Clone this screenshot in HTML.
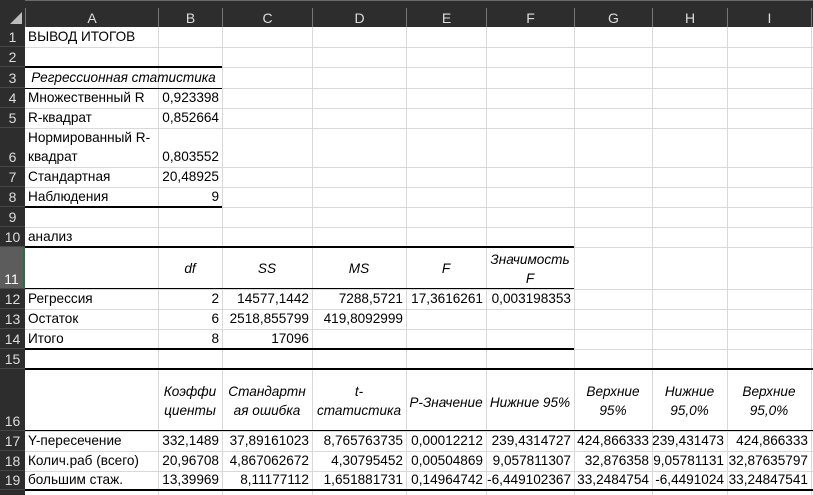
<!DOCTYPE html>
<html><head><meta charset="utf-8"><style>
*{margin:0;padding:0;box-sizing:border-box}
body{width:813px;height:495px;overflow:hidden;background:#fff;position:relative;font-family:"Liberation Sans","DejaVu Sans",sans-serif;font-size:13.6px;color:#000}
div{position:absolute}
.v{width:1px;background:#d9d9d9;top:27px;height:468px}
.h{height:1px;background:#d9d9d9;left:25px;width:788px}
.k{background:#000}
.c{display:flex;align-items:flex-end;line-height:19px;padding-bottom:1px;white-space:nowrap}
.l{padding-left:3px}
.r{justify-content:flex-end;padding-right:3px}
.m{justify-content:center;text-align:center;font-style:italic}
.hd{background:#2d2d2d;color:#dcdcdc;font-size:14px;display:flex;align-items:center;justify-content:center}
.rh{left:0;width:25px;background:#2d2d2d;color:#dcdcdc;font-size:14px;display:flex;align-items:flex-end;justify-content:center;padding-bottom:1px;border-bottom:1px solid #474747}
</style></head><body>
<div class="v" style="left:158px"></div><div class="v" style="left:222px"></div><div class="v" style="left:312px"></div><div class="v" style="left:406px"></div><div class="v" style="left:486px"></div><div class="v" style="left:574px"></div><div class="v" style="left:652px"></div><div class="v" style="left:727px"></div><div class="v" style="left:811px"></div>
<div class="h" style="top:47px"></div><div class="h" style="top:67px"></div><div class="h" style="top:88px"></div><div class="h" style="top:108px"></div><div class="h" style="top:128px"></div><div class="h" style="top:167px"></div><div class="h" style="top:187px"></div><div class="h" style="top:207px"></div><div class="h" style="top:227px"></div><div class="h" style="top:247px"></div><div class="h" style="top:289px"></div><div class="h" style="top:309px"></div><div class="h" style="top:329px"></div><div class="h" style="top:349px"></div><div class="h" style="top:369px"></div><div class="h" style="top:431px"></div><div class="h" style="top:451px"></div><div class="h" style="top:471px"></div><div class="h" style="top:490px"></div>
<div class="k" style="left:25px;top:66px;width:197px;height:2px"></div>
<div class="k" style="left:25px;top:88px;width:197px;height:1px"></div>
<div class="k" style="left:25px;top:206px;width:197px;height:2px"></div>
<div class="k" style="left:25px;top:246px;width:549px;height:2px"></div>
<div class="k" style="left:25px;top:288px;width:549px;height:1px"></div>
<div class="k" style="left:25px;top:348px;width:549px;height:2px"></div>
<div class="k" style="left:25px;top:368px;width:788px;height:2px"></div>
<div class="k" style="left:25px;top:430px;width:788px;height:1px"></div>
<div class="k" style="left:25px;top:489px;width:788px;height:2px"></div>
<div style="left:0;top:0;width:813px;height:27px;background:#2d2d2d;border-top:1px solid #6a6a6a"></div>
<div style="left:0;top:0;width:25px;height:27px;background:#2d2d2d"></div>
<div style="left:10px;top:12px;width:0;height:0;border-left:12px solid transparent;border-bottom:12px solid #bdbdbd"></div>
<div class="hd" style="left:25px;top:8px;width:133px;height:19px;border-left:1px solid #777">A</div>
<div class="hd" style="left:158px;top:8px;width:64px;height:19px;border-left:1px solid #777">B</div>
<div class="hd" style="left:222px;top:8px;width:90px;height:19px;border-left:1px solid #777">C</div>
<div class="hd" style="left:312px;top:8px;width:94px;height:19px;border-left:1px solid #777">D</div>
<div class="hd" style="left:406px;top:8px;width:80px;height:19px;border-left:1px solid #777">E</div>
<div class="hd" style="left:486px;top:8px;width:88px;height:19px;border-left:1px solid #777">F</div>
<div class="hd" style="left:574px;top:8px;width:78px;height:19px;border-left:1px solid #777">G</div>
<div class="hd" style="left:652px;top:8px;width:75px;height:19px;border-left:1px solid #777">H</div>
<div class="hd" style="left:727px;top:8px;width:84px;height:19px;border-left:1px solid #777">I</div>
<div class="hd" style="left:811px;top:8px;width:2px;height:19px;border-left:1px solid #777"></div>
<div style="left:0;top:27px;width:25px;height:468px;background:#2d2d2d"></div>
<div class="rh" style="top:27px;height:20px">1</div>
<div class="rh" style="top:47px;height:20px">2</div>
<div class="rh" style="top:67px;height:21px">3</div>
<div class="rh" style="top:88px;height:20px">4</div>
<div class="rh" style="top:108px;height:20px">5</div>
<div class="rh" style="top:128px;height:39px">6</div>
<div class="rh" style="top:167px;height:20px">7</div>
<div class="rh" style="top:187px;height:20px">8</div>
<div class="rh" style="top:207px;height:20px">9</div>
<div class="rh" style="top:227px;height:20px">10</div>
<div class="rh" style="top:247px;height:42px;background:#5c5c5c;color:#fff;border-right:2px solid #217346">11</div>
<div class="rh" style="top:289px;height:20px">12</div>
<div class="rh" style="top:309px;height:20px">13</div>
<div class="rh" style="top:329px;height:20px">14</div>
<div class="rh" style="top:349px;height:20px">15</div>
<div class="rh" style="top:369px;height:62px">16</div>
<div class="rh" style="top:431px;height:20px">17</div>
<div class="rh" style="top:451px;height:20px">18</div>
<div class="rh" style="top:471px;height:19px">19</div>
<div class="c l" style="left:25px;top:27px;width:133px;height:20px">ВЫВОД ИТОГОВ</div>
<div class="c m" style="left:25px;top:68px;width:197px;height:20px">Регрессионная статистика</div>
<div class="c l" style="left:25px;top:88px;width:133px;height:20px">Множественный R</div><div class="c r" style="left:158px;top:88px;width:64px;height:20px">0,923398</div>
<div class="c l" style="left:25px;top:108px;width:133px;height:20px">R-квадрат</div><div class="c r" style="left:158px;top:108px;width:64px;height:20px">0,852664</div>
<div class="c l" style="left:25px;top:128px;width:133px;height:39px">Нормированный R-<br>квадрат</div><div class="c r" style="left:158px;top:128px;width:64px;height:39px">0,803552</div>
<div class="c l" style="left:25px;top:167px;width:133px;height:20px">Стандартная</div><div class="c r" style="left:158px;top:167px;width:64px;height:20px">20,48925</div>
<div class="c l" style="left:25px;top:187px;width:133px;height:20px">Наблюдения</div><div class="c r" style="left:158px;top:187px;width:64px;height:20px">9</div>
<div class="c l" style="left:25px;top:227px;width:133px;height:20px">анализ</div>
<div class="c m" style="left:158px;top:247px;width:64px;height:42px;padding-bottom:11px">df</div>
<div class="c m" style="left:222px;top:247px;width:90px;height:42px;padding-bottom:11px">SS</div>
<div class="c m" style="left:312px;top:247px;width:94px;height:42px;padding-bottom:11px">MS</div>
<div class="c m" style="left:406px;top:247px;width:80px;height:42px;padding-bottom:11px">F</div>
<div class="c m" style="left:486px;top:247px;width:88px;height:42px">Значимость<br>F</div>
<div class="c l" style="left:25px;top:289px;width:133px;height:20px">Регрессия</div><div class="c r" style="left:158px;top:289px;width:64px;height:20px">2</div><div class="c r" style="left:222px;top:289px;width:90px;height:20px">14577,1442</div><div class="c r" style="left:312px;top:289px;width:94px;height:20px">7288,5721</div><div class="c r" style="left:406px;top:289px;width:80px;height:20px">17,3616261</div><div class="c r" style="left:486px;top:289px;width:88px;height:20px">0,003198353</div>
<div class="c l" style="left:25px;top:309px;width:133px;height:20px">Остаток</div><div class="c r" style="left:158px;top:309px;width:64px;height:20px">6</div><div class="c r" style="left:222px;top:309px;width:90px;height:20px">2518,855799</div><div class="c r" style="left:312px;top:309px;width:94px;height:20px">419,8092999</div>
<div class="c l" style="left:25px;top:329px;width:133px;height:20px">Итого</div><div class="c r" style="left:158px;top:329px;width:64px;height:20px">8</div><div class="c r" style="left:222px;top:329px;width:90px;height:20px">17096</div>
<div class="c m" style="left:158px;top:370px;width:64px;height:61px;padding-bottom:11px">Коэффи<br>циенты</div>
<div class="c m" style="left:222px;top:370px;width:90px;height:61px;padding-bottom:11px">Стандартн<br>ая ошибка</div>
<div class="c m" style="left:312px;top:370px;width:94px;height:61px;padding-bottom:11px">t-<br>статистика</div>
<div class="c m" style="left:406px;top:370px;width:80px;height:61px;padding-bottom:19px">P-Значение</div>
<div class="c m" style="left:486px;top:370px;width:88px;height:61px;padding-bottom:19px">Нижние 95%</div>
<div class="c m" style="left:574px;top:370px;width:78px;height:61px;padding-bottom:11px">Верхние<br>95%</div>
<div class="c m" style="left:652px;top:370px;width:75px;height:61px;padding-bottom:11px">Нижние<br>95,0%</div>
<div class="c m" style="left:727px;top:370px;width:84px;height:61px;padding-bottom:11px">Верхние<br>95,0%</div>
<div class="c l" style="left:25px;top:431px;width:133px;height:20px">Y-пересечение</div><div class="c r" style="left:158px;top:431px;width:64px;height:20px">332,1489</div><div class="c r" style="left:222px;top:431px;width:90px;height:20px">37,89161023</div><div class="c r" style="left:312px;top:431px;width:94px;height:20px">8,765763735</div><div class="c r" style="left:406px;top:431px;width:80px;height:20px">0,00012212</div><div class="c r" style="left:486px;top:431px;width:88px;height:20px">239,4314727</div><div class="c r" style="left:574px;top:431px;width:78px;height:20px">424,866333</div><div class="c r" style="left:652px;top:431px;width:75px;height:20px">239,431473</div><div class="c r" style="left:727px;top:431px;width:84px;height:20px">424,866333</div>
<div class="c l" style="left:25px;top:451px;width:133px;height:20px">Колич.раб (всего)</div><div class="c r" style="left:158px;top:451px;width:64px;height:20px">20,96708</div><div class="c r" style="left:222px;top:451px;width:90px;height:20px">4,867062672</div><div class="c r" style="left:312px;top:451px;width:94px;height:20px">4,30795452</div><div class="c r" style="left:406px;top:451px;width:80px;height:20px">0,00504869</div><div class="c r" style="left:486px;top:451px;width:88px;height:20px">9,057811307</div><div class="c r" style="left:574px;top:451px;width:78px;height:20px">32,876358</div><div class="c r" style="left:652px;top:451px;width:75px;height:20px">9,05781131</div><div class="c r" style="left:727px;top:451px;width:84px;height:20px">32,87635797</div>
<div class="c l" style="left:25px;top:471px;width:133px;height:19px">большим стаж.</div><div class="c r" style="left:158px;top:471px;width:64px;height:19px">13,39969</div><div class="c r" style="left:222px;top:471px;width:90px;height:19px">8,11177112</div><div class="c r" style="left:312px;top:471px;width:94px;height:19px">1,651881731</div><div class="c r" style="left:406px;top:471px;width:80px;height:19px">0,14964742</div><div class="c r" style="left:486px;top:471px;width:88px;height:19px">-6,449102367</div><div class="c r" style="left:574px;top:471px;width:78px;height:19px">33,2484754</div><div class="c r" style="left:652px;top:471px;width:75px;height:19px">-6,4491024</div><div class="c r" style="left:727px;top:471px;width:84px;height:19px">33,24847541</div>
</body></html>
